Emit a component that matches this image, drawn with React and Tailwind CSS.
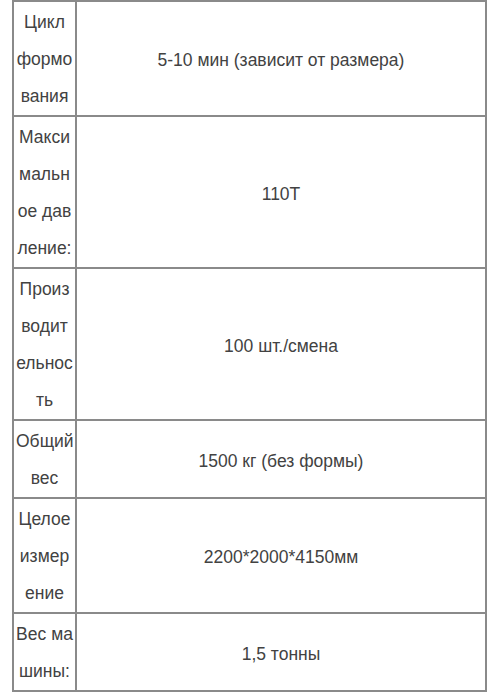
const rows = [
  { label: ['Цикл', 'формо', 'вания'], value: '5-10 мин (зависит от размера)' },
  { label: ['Макси', 'мальн', 'ое дав', 'ление:'], value: '110T' },
  { label: ['Произ', 'водит', 'ельнос', 'ть'], value: '100 шт./смена' },
  { label: ['Общий', 'вес'], value: '1500 кг (без формы)' },
  { label: ['Целое', 'измер', 'ение'], value: '2200*2000*4150мм' },
  { label: ['Вес ма', 'шины:'], value: '1,5 тонны' },
]

export default function App() {
  return (
    <div className="min-h-screen bg-white" style={{ fontFamily: '"Liberation Sans", Arial, sans-serif' }}>
      <div className="ml-[12px] w-[475px] border-l-2 border-t-2 border-[#8a8a8a] grid grid-cols-[63px_1fr] text-[17.5px] text-[#424242]">
        {rows.map((row) => (
          <div key={row.value} className="contents">
            <div className="border-r-2 border-b-2 border-[#8a8a8a] px-[2px] pt-[2px] leading-[37px] text-center whitespace-nowrap">
              {row.label.map((line, i) => (
                <div key={i}>{line}</div>
              ))}
            </div>
            <div className="border-r-2 border-b-2 border-[#8a8a8a] px-2 pt-[4px] flex items-center justify-center text-center">
              {row.value}
            </div>
          </div>
        ))}
      </div>
    </div>
  )
}
